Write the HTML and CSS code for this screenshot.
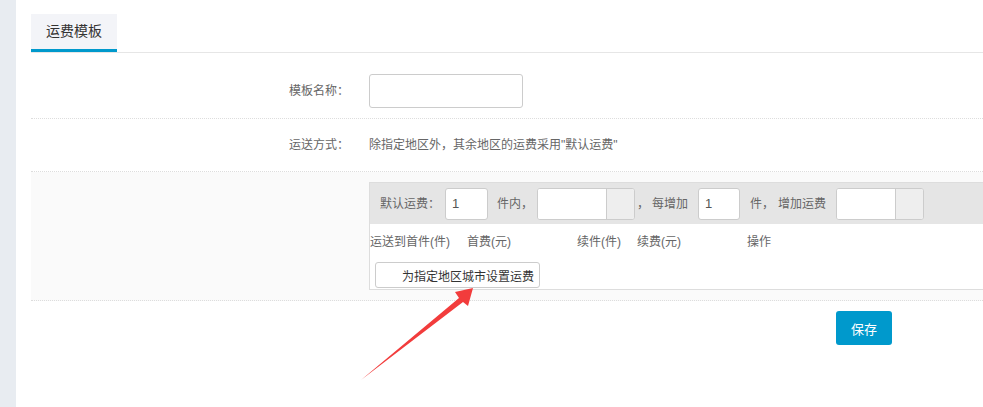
FILE: index.html
```html
<!DOCTYPE html>
<html lang="zh-CN">
<head>
    <meta charset="UTF-8">
    <meta name="viewport" content="width=device-width, initial-scale=1.0">
    <title>运费模板</title>
    <link rel="stylesheet" href="styles.css">
</head>
<body>

<div class="page">
    <aside class="side"></aside>

    <main class="main">
        <div class="tabs">
            <span class="tab active">运费模板</span>
        </div>

        <form class="form" onsubmit="return false">
            <div class="row row-name">
                <label class="row-label">模板名称：</label>
                <div class="row-value">
                    <input type="text" class="text-input name-input">
                </div>
            </div>

            <div class="row row-text">
                <label class="row-label">运送方式：</label>
                <div class="row-value">除指定地区外，其余地区的运费采用"默认运费"</div>
            </div>

            <div class="row row-fee">
                <div class="row-label"></div>
                <div class="row-value">
                    <div class="fee-box">
                        <div class="fee-default">
                            <span>默认运费：</span>
                            <input type="text" class="text-input num-input first-num" value="1">
                            <span class="t-in">件内，</span>
                            <span class="addon-group first-group">
                                <input type="text" class="addon-input">
                                <span class="addon"></span>
                            </span>
                            <span class="t-comma">，</span>
                            <span class="t-each">每增加</span>
                            <input type="text" class="text-input num-input add-num" value="1">
                            <span class="t-unit">件，</span>
                            <span class="t-add">增加运费</span>
                            <span class="addon-group add-group">
                                <input type="text" class="addon-input">
                                <span class="addon"></span>
                            </span>
                        </div>

                        <div class="fee-head">
                            <span>运送到首件(件)</span>
                            <span>首费(元)</span>
                            <span>续件(件)</span>
                            <span>续费(元)</span>
                            <span>操作</span>
                        </div>

                        <button type="button" class="btn-area">为指定地区城市设置运费</button>
                    </div>
                </div>
            </div>

            <div class="actions">
                <button type="submit" class="btn-save">保存</button>
            </div>
        </form>
    </main>

    <!-- annotation arrow -->
    <svg class="arrow" width="983" height="407" viewBox="0 0 983 407">
        <polygon points="361,380 459,298 455,292 473,288 468,306 463,302" fill="#f23c3c"/>
    </svg>
</div>

</body>
</html>
```

FILE: styles.css
```css
* {
    box-sizing: border-box;
}
body {
    margin: 0;
    font-family: "Liberation Sans", "Noto Sans CJK SC", sans-serif;
    font-size: 12px;
    color: #666;
    background: #fff;
}
.page {
    position: relative;
    display: flex;
    min-height: 407px;
    overflow: hidden;
}
.side {
    width: 16px;
    flex-shrink: 0;
    background-color: #e8ecf1;
}
.main {
    flex: 1;
    padding: 14px 0 0 15px;
}

/* tabs */
.tabs {
    height: 39px;
    border-bottom: 1px solid #e6e6e6;
}
.tab {
    display: inline-block;
    width: 86px;
    height: 38px;
    line-height: 35px;
    text-align: center;
    font-size: 14px;
    color: #333;
    background-color: #f3f4f8;
    border-bottom: 3px solid #0099cc;
}

/* form rows */
.form {
    padding-top: 6px;
}
.row {
    display: flex;
    border-bottom: 1px dotted #ddd;
}
.row-label {
    width: 318px;
    flex-shrink: 0;
    text-align: right;
    line-height: 20px;
}
.row-value {
    flex: 1;
    margin-left: 20px;
    line-height: 20px;
}
.row-name {
    align-items: center;
    padding: 15px 0 10px;
}
.row-text {
    padding: 16px 0;
}
.row-fee {
    padding: 10px 0;
    background-color: #fafafa;
}

.text-input {
    border: 1px solid #ccc;
    border-radius: 3px;
    background: #fff;
    font-family: "Liberation Sans", sans-serif;
    outline: none;
}
.name-input {
    width: 154px;
    height: 34px;
}

/* fee box */
.fee-box {
    border: 1px solid #ddd;
    border-right: 0;
    background-color: #fff;
    padding-bottom: 1px;
}
.fee-default {
    display: flex;
    align-items: center;
    height: 41px;
    padding-left: 10px;
    background-color: #e5e5e5;
    white-space: nowrap;
}
.num-input {
    height: 32px;
    padding: 0 6px;
    font-size: 13px;
    color: #555;
}
.first-num {
    width: 43px;
    margin-left: 5px;
}
.add-num {
    width: 42px;
    margin-left: 10px;
}
.t-in {
    margin-left: 9px;
}
.t-comma {
    margin-left: 2px;
}
.t-each {
    margin-left: 3px;
}
.t-unit {
    margin-left: 10px;
}
.t-add {
    margin-left: 4px;
}
.addon-group {
    display: flex;
    height: 32px;
    border: 1px solid #ccc;
    border-radius: 3px;
    overflow: hidden;
    background: #fff;
}
.first-group {
    width: 98px;
    margin-left: 4px;
}
.add-group {
    width: 88px;
    margin-left: 10px;
}
.addon-input {
    flex: 1;
    min-width: 0;
    border: none;
    outline: none;
}
.addon {
    width: 28px;
    background-color: #eee;
    border-left: 1px solid #ccc;
}

.fee-head {
    display: grid;
    grid-template-columns: 97px 110px 60px 110px auto;
    margin-top: 8px;
    line-height: 20px;
    white-space: nowrap;
}

.btn-area {
    display: block;
    width: 165px;
    height: 26px;
    margin: 10px 0 0 5px;
    padding: 0 4px 0 26px;
    text-align: left;
    font-family: "Liberation Sans", "Noto Sans CJK SC", sans-serif;
    font-size: 12px;
    color: #333;
    background-color: #fff;
    border: 1px solid #ccc;
    border-radius: 3px;
    cursor: pointer;
}

/* save */
.actions {
    padding: 10px 0 0 805px;
}
.btn-save {
    width: 56px;
    height: 34px;
    font-family: "Liberation Sans", "Noto Sans CJK SC", sans-serif;
    font-size: 13px;
    color: #fff;
    background-color: #0099cc;
    border: none;
    border-radius: 3px;
    cursor: pointer;
}
.btn-save:hover {
    background-color: #0087b4;
}

.arrow {
    position: absolute;
    top: 0;
    left: 0;
    pointer-events: none;
}
```
